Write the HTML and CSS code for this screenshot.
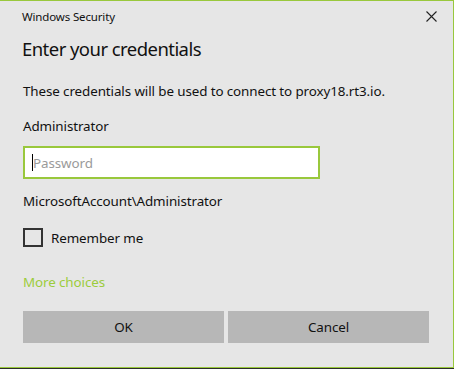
FILE: index.html
```html
<!DOCTYPE html>
<html lang="en">

<head>
    <meta charset="UTF-8">
    <meta name="viewport" content="width=device-width, initial-scale=1.0">
    <title>Windows Security</title>
    <link rel="stylesheet" href="styles.css">
</head>

<body>
    <div class="dialog">
        <div class="titlebar">
            <span class="titlebar-text">Windows Security</span>
            <button class="close" aria-label="Close">
                <svg width="11" height="11" viewBox="0 0 11 11">
                    <path d="M0.5 0.5 L10.5 10.5 M10.5 0.5 L0.5 10.5" stroke="#222" stroke-width="1.1" fill="none"/>
                </svg>
            </button>
        </div>

        <div class="content">
            <h1 class="heading">Enter your credentials</h1>
            <p class="info">These credentials will be used to connect to proxy18.rt3.io.</p>
            <p class="user">Administrator</p>
            <div class="field">
                <span class="caret"></span>
                <input class="password" type="password" placeholder="Password">
            </div>
            <p class="account">MicrosoftAccount\Administrator</p>
            <label class="remember">
                <span class="checkbox"></span>
                <span>Remember me</span>
            </label>
            <a href="#" class="more">More choices</a>
            <div class="buttons">
                <button class="btn">OK</button>
                <button class="btn">Cancel</button>
            </div>
        </div>
    </div>
</body>

</html>
```

FILE: styles.css
```css
html,
body {
    margin: 0;
    padding: 0;
}

body {
    background-color: #2b2b2b;
    font-family: "Noto Sans", "Open Sans", sans-serif;
    color: #111;
}

.dialog {
    box-sizing: border-box;
    width: 454px;
    height: 368px;
    background-color: #e6e6e6;
    border-top: 1px solid #99c83c;
    border-right: 1px solid #99c83c;
    border-bottom: 1px solid #99c83c;
}

/* title bar */
.titlebar {
    display: flex;
    align-items: center;
    justify-content: space-between;
    height: 31px;
    padding-left: 22px;
    padding-right: 16px;
}

.titlebar-text {
    font-size: 11.5px;
    letter-spacing: -0.15px;
}

.close {
    display: flex;
    padding: 0;
    border: 0;
    background: none;
}

/* body */
.content {
    display: flex;
    flex-direction: column;
    padding: 0 24px 0 23px;
}

.heading {
    margin: 1px 0 0 -1px;
    font-size: 18.5px;
    font-weight: 400;
    letter-spacing: -0.55px;
    line-height: 32px;
}

.info,
.user,
.account,
.remember,
.more,
.btn,
.password {
    font-size: 13.4px;
    letter-spacing: -0.1px;
}

.info,
.user,
.account {
    margin: 0;
    line-height: 20px;
}

.info {
    margin-top: 16px;
}

.user {
    margin-top: 15px;
}

.field {
    position: relative;
    margin-top: 10px;
    width: 297px;
}

.password {
    box-sizing: border-box;
    width: 297px;
    height: 33px;
    margin: 0;
    padding: 0 8px;
    border: 2px solid #99c83c;
    background-color: #fff;
    font-family: inherit;
    outline: 0;
}

.password::placeholder {
    color: #9a9a9a;
}

.caret {
    position: absolute;
    left: 9px;
    top: 8px;
    width: 1px;
    height: 17px;
    background-color: #000;
}

.account {
    margin-top: 12px;
}

.remember {
    display: flex;
    align-items: center;
    gap: 8px;
    margin-top: 17px;
}

.checkbox {
    box-sizing: border-box;
    width: 20px;
    height: 19px;
    border: 2px solid #333;
}

.more {
    margin-top: 25px;
    line-height: 20px;
    color: #9ccc3c;
    text-decoration: none;
    align-self: flex-start;
}

.buttons {
    display: grid;
    grid-template-columns: 201px 201px;
    gap: 4px;
    margin-top: 19px;
}

.btn {
    height: 32px;
    border: 0;
    background-color: #b7b7b7;
    font-family: inherit;
    color: #111;
}
```
